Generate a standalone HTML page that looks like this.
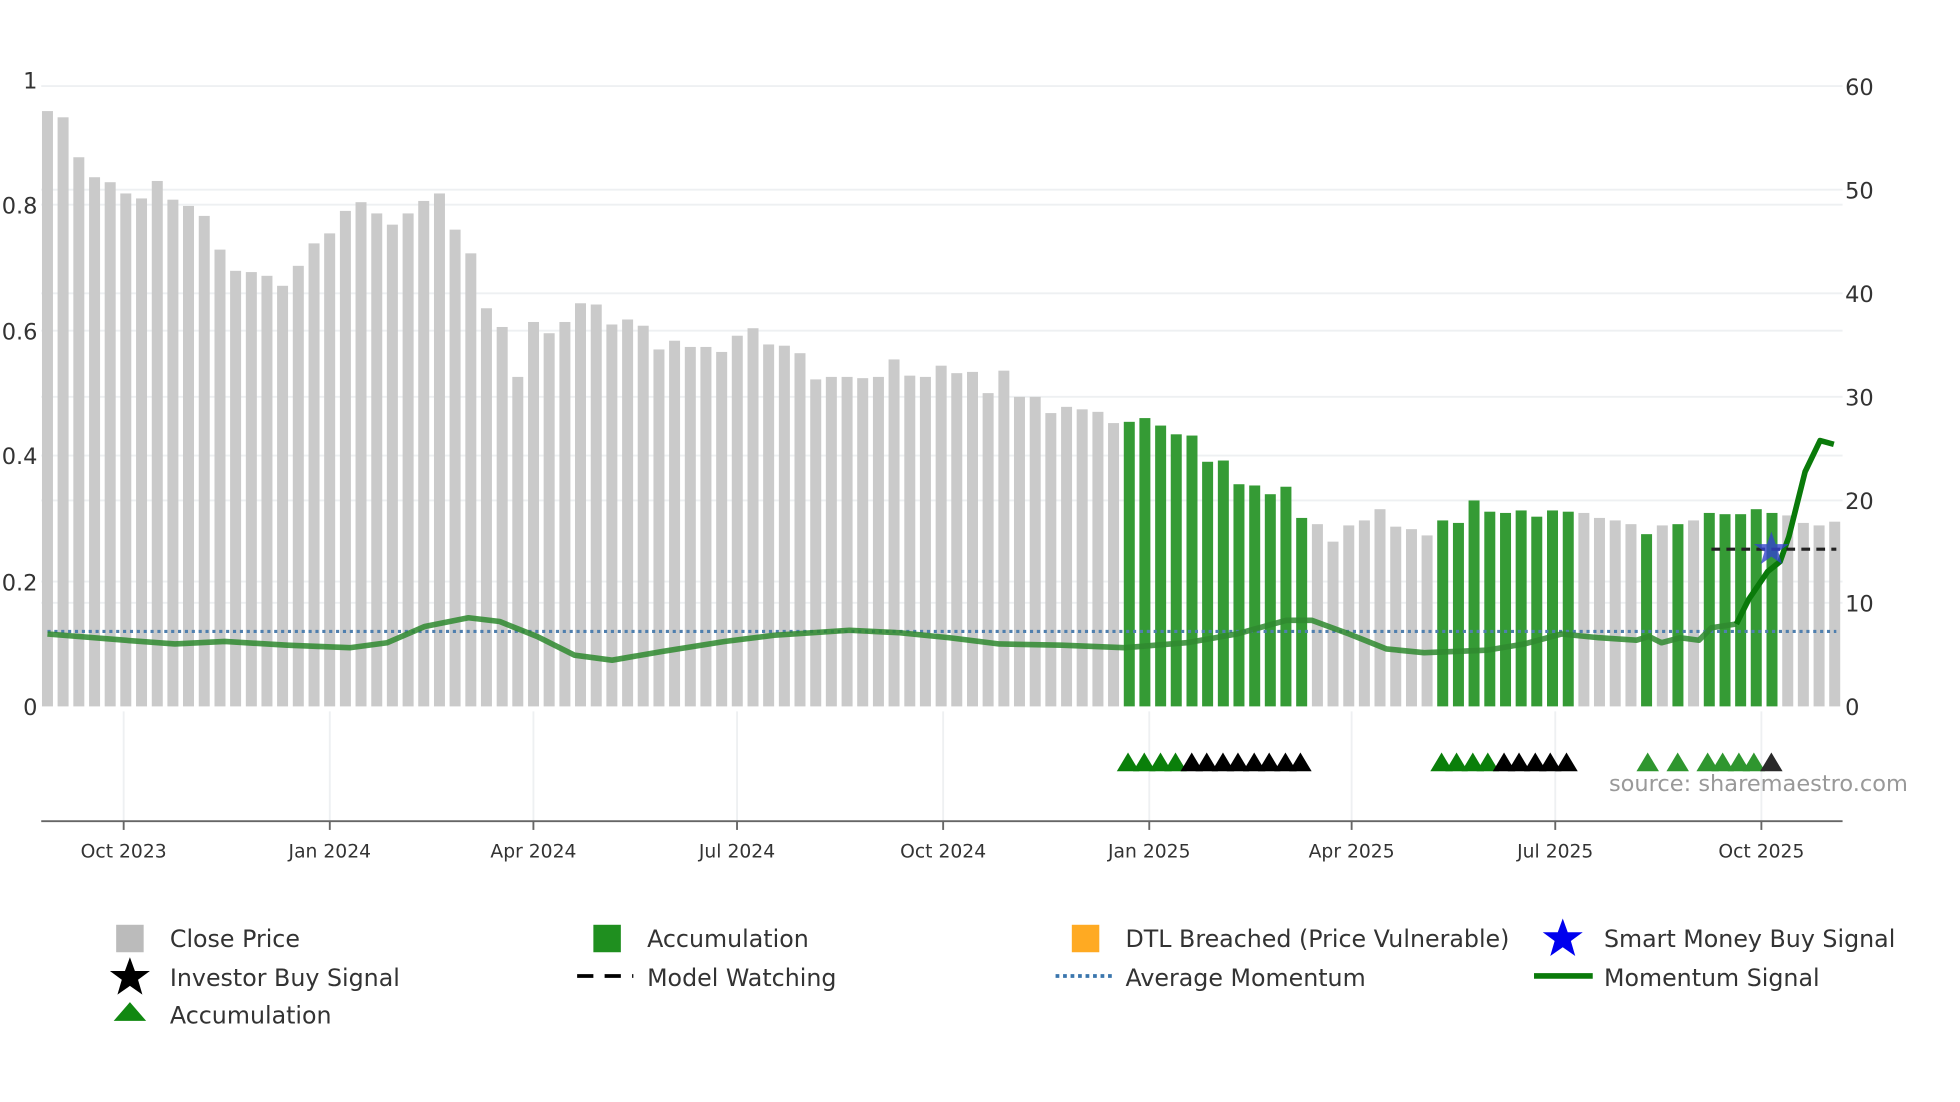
<!DOCTYPE html>
<html><head><meta charset="utf-8"><style>html,body{margin:0;padding:0;background:#fff;}svg{display:block;}text{font-family:"DejaVu Sans","Liberation Sans",sans-serif;}</style></head>
<body>
<svg id="s" width="1960" height="1102" viewBox="0 0 1569 883" preserveAspectRatio="none" xmlns="http://www.w3.org/2000/svg">
<rect width="1569" height="883" fill="#fff"/>
<g stroke="#eef0f2" stroke-width="1.5">
<line x1="33" y1="69" x2="1475" y2="69"/><line x1="33" y1="152" x2="1475" y2="152"/><line x1="33" y1="235" x2="1475" y2="235"/><line x1="33" y1="318" x2="1475" y2="318"/><line x1="33" y1="401" x2="1475" y2="401"/><line x1="33" y1="483" x2="1475" y2="483"/>
<line x1="33" y1="164" x2="1475" y2="164"/><line x1="33" y1="265" x2="1475" y2="265"/><line x1="33" y1="365" x2="1475" y2="365"/><line x1="33" y1="466" x2="1475" y2="466"/>
<line x1="99" y1="570" x2="99" y2="658"/><line x1="264" y1="570" x2="264" y2="658"/><line x1="427" y1="570" x2="427" y2="658"/><line x1="590" y1="570" x2="590" y2="658"/><line x1="755" y1="570" x2="755" y2="658"/><line x1="920" y1="570" x2="920" y2="658"/><line x1="1082" y1="570" x2="1082" y2="658"/><line x1="1245" y1="570" x2="1245" y2="658"/><line x1="1410" y1="570" x2="1410" y2="658"/>
</g>
<g id="bars"></g>
<line x1="38" y1="506" x2="1470" y2="506" stroke="#4f7fae" stroke-width="2.5" stroke-dasharray="2.5 3"/>
<polyline fill="none" stroke="#2f8a2f" stroke-opacity="0.85" stroke-width="4.5" stroke-linejoin="round" points="38,508 100,513 140,516 180,514 230,517 280,519 310,515 340,502 375,495 400,498 430,510 460,525 490,529 530,522 580,514 620,509 680,505 720,507 760,511 800,516 850,517 900,519 950,515 990,508 1030,497 1050,497 1080,508 1110,520 1140,523 1190,521 1220,516 1250,508 1280,511 1310,513 1320,510 1330,515 1345,511 1360,513 1370,503 1390,500"/>
<polyline fill="none" stroke="#0a7a0a" stroke-width="4.5" stroke-linejoin="round" points="1390,500 1400,480 1415,458 1425,450 1432,430 1445,378 1457,353 1468,356"/>
<line x1="1370" y1="440" x2="1470" y2="440" stroke="#222" stroke-width="2.5" stroke-dasharray="7 5"/>
<polygon points="1418,426 1421.5,436 1432,436 1423.5,442 1426.5,452 1418,446 1409.5,452 1412.5,442 1404,436 1414.5,436" fill="#3344cc" fill-opacity="0.8"/>
<g id="tri"></g>
<line x1="33" y1="658" x2="1475" y2="658" stroke="#666" stroke-width="1.5"/>
<g stroke="#666" stroke-width="1.5"><line x1="99" y1="658" x2="99" y2="665"/><line x1="264" y1="658" x2="264" y2="665"/><line x1="427" y1="658" x2="427" y2="665"/><line x1="590" y1="658" x2="590" y2="665"/><line x1="755" y1="658" x2="755" y2="665"/><line x1="920" y1="658" x2="920" y2="665"/><line x1="1082" y1="658" x2="1082" y2="665"/><line x1="1245" y1="658" x2="1245" y2="665"/><line x1="1410" y1="658" x2="1410" y2="665"/></g>
<g font-size="15" fill="#333" text-anchor="middle">
<text x="99" y="687">Oct 2023</text><text x="264" y="687">Jan 2024</text><text x="427" y="687">Apr 2024</text><text x="590" y="687">Jul 2024</text><text x="755" y="687">Oct 2024</text><text x="920" y="687">Jan 2025</text><text x="1082" y="687">Apr 2025</text><text x="1245" y="687">Jul 2025</text><text x="1410" y="687">Oct 2025</text>
</g>
<g font-size="18" fill="#333" text-anchor="end">
<text x="30" y="71">1</text><text x="30" y="171">0.8</text><text x="30" y="272">0.6</text><text x="30" y="372">0.4</text><text x="30" y="473">0.2</text><text x="30" y="573">0</text>
</g>
<g font-size="18" fill="#333">
<text x="1477" y="76">60</text><text x="1477" y="159">50</text><text x="1477" y="242">40</text><text x="1477" y="325">30</text><text x="1477" y="408">20</text><text x="1477" y="490">10</text><text x="1477" y="573">0</text>
</g>
<text x="1288" y="634" font-size="18" fill="#999">source: sharemaestro.com</text>
<g font-size="19" fill="#333">
<rect x="93" y="741" width="22" height="22" fill="#bbb"/><text x="136" y="759">Close Price</text>
<rect x="475" y="741" width="22" height="22" fill="#1f8f1f"/><text x="518" y="759">Accumulation</text>
<rect x="858" y="741" width="22" height="22" fill="#ffaa22"/><text x="901" y="759">DTL Breached (Price Vulnerable)</text>
<polygon points="1251,736 1255,747 1267,747 1257.5,754 1261,766 1251,759 1241,766 1244.5,754 1235,747 1247,747" fill="#0000ee"/><text x="1284" y="759">Smart Money Buy Signal</text>
<polygon points="104,767 108,778 120,778 110.5,785 114,797 104,790 94,797 97.5,785 88,778 100,778" fill="#000"/><text x="136" y="790">Investor Buy Signal</text>
<line x1="462" y1="782" x2="507" y2="782" stroke="#000" stroke-width="3" stroke-dasharray="13 9"/><text x="518" y="790">Model Watching</text>
<line x1="845" y1="782" x2="890" y2="782" stroke="#3a76ad" stroke-width="3" stroke-dasharray="3 3"/><text x="901" y="790">Average Momentum</text>
<line x1="1228" y1="782" x2="1275" y2="782" stroke="#0a7a0a" stroke-width="4.5"/><text x="1284" y="790">Momentum Signal</text>
<polygon points="104,803 117,818 91,818" fill="#118811"/><text x="136" y="820">Accumulation</text>
</g>
</svg>
<script>
var tops=[89,94,126,142,146,155,159,145,160,165,173,200,217,218,221,229,213,195,187,169,162,171,180,171,161,155,184,203,247,262,302,258,267,258,243,244,260,256,261,280,273,278,278,282,269,263,276,277,283,304,302,302,303,302,288,301,302,293,299,298,315,297,318,318,331,326,328,330,339,
338,335,341,348,349,370,369,388,389,396,390,415,420,434,421,417,408,422,424,429,417,419,401,410,411,409,414,409,410,411,415,417,420,428,421,420,417,411,412,412,408,411,413,419,421,418];
var green={};[[69,80],[89,97],[102,102],[104,104],[106,110]].forEach(function(r){for(var i=r[0];i<=r[1];i++)green[i]=1;});
var g=document.getElementById("bars"),h="";
for(var i=0;i<tops.length;i++){var x=38+12.55*i;h+='<rect x="'+(x-4.4).toFixed(1)+'" y="'+tops[i]+'" width="8.8" height="'+(566-tops[i])+'" fill="'+(green[i]?"#359b35":"#cacaca")+'"/>';}
g.innerHTML=h;
var t="",tr=function(x,c){t+='<polygon points="'+(x-9)+',618 '+x+',603 '+(x+9)+',618" fill="'+c+'"/>';};
[903,916,929,941].forEach(function(x){tr(x,"#0a7f0a")});
[954,966,979,991,1004,1016,1029,1041].forEach(function(x){tr(x,"#000")});
[1154,1166,1179,1191].forEach(function(x){tr(x,"#0a7f0a")});
[1204,1216,1229,1241,1254].forEach(function(x){tr(x,"#000")});
[1319,1343,1367,1379,1392,1404].forEach(function(x){tr(x,"#2f962f")});
tr(1418,"#2a2a2a");
document.getElementById("tri").innerHTML=t;
</script>
</body></html>
